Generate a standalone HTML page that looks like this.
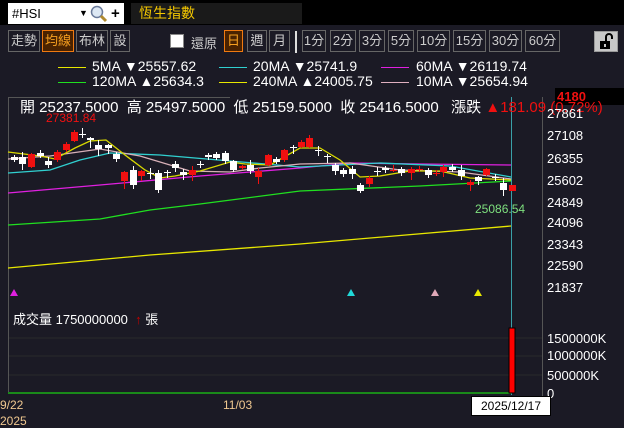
<!DOCTYPE html>
<html><head><meta charset="utf-8"><style>
*{margin:0;padding:0;box-sizing:border-box}
body{width:624px;height:426px;background:#1b1a25;overflow:hidden;position:relative;font-family:"Liberation Sans","Noto Sans CJK TC",sans-serif;color:#fff}
.a{position:absolute;white-space:nowrap}
.b{position:absolute;border:1px solid #666;color:#ccc;font-size:13px;text-align:center;line-height:20px;height:22px;top:30px}
.o{border-color:#f07a10;background:#4a2200;color:#f7a020}
</style></head><body>
<div class="a" style="left:0;top:0;width:624px;height:25px;background:#000"></div>
<div class="a" style="left:8px;top:3px;width:116px;height:21px;background:#fff;color:#000;font-size:13px;line-height:21px;padding-left:4px">#HSI<span style="position:absolute;left:71px;font-size:9px">▼</span>
<svg style="position:absolute;left:82px;top:2px" width="18" height="18"><circle cx="7" cy="7" r="5.5" fill="#dde8f4" stroke="#6a7a9a" stroke-width="1.5"/><line x1="11" y1="11" x2="16" y2="16" stroke="#b08a30" stroke-width="3"/></svg>
<span style="position:absolute;left:103px;font-weight:bold;font-size:15px">+</span></div>
<div class="a" style="left:131px;top:3px;width:171px;height:21px;background:#1a1a1a;color:#f5c800;font-size:14px;line-height:21px;padding-left:8px">恆生指數</div>
<div class="b" style="left:8px;width:32px">走勢</div>
<div class="b o" style="left:42px;width:32px">均線</div>
<div class="b" style="left:76px;width:32px">布林</div>
<div class="b" style="left:110px;width:20px">設</div>
<div class="a" style="left:170px;top:34px;width:14px;height:14px;background:#fff;border:1px solid #888"></div>
<div class="a" style="left:191px;top:33px;font-size:13px;color:#ccc">還原</div>
<div class="b o" style="left:224px;width:19px">日</div>
<div class="b" style="left:247px;width:20px">週</div>
<div class="b" style="left:269px;width:21px">月</div>
<div class="a" style="left:295px;top:31px;width:2px;height:22px;background:#ddd"></div>
<div class="b" style="left:302px;width:24px">1分</div>
<div class="b" style="left:330px;width:26px">2分</div>
<div class="b" style="left:359px;width:26px">3分</div>
<div class="b" style="left:388px;width:26px">5分</div>
<div class="b" style="left:417px;width:33px">10分</div>
<div class="b" style="left:453px;width:33px">15分</div>
<div class="b" style="left:489px;width:33px">30分</div>
<div class="b" style="left:525px;width:35px">60分</div>
<div class="a" style="left:594px;top:31px;width:24px;height:21px;background:#c8c8c8;border:1px solid #999">
<svg width="22" height="19"><path d="M11 9 V5 a3 3 0 0 1 6 0 V7" fill="none" stroke="#000" stroke-width="2"/><rect x="5" y="9" width="10" height="8" fill="#000"/><rect x="9" y="12" width="2" height="3" fill="#c8c8c8"/></svg></div>
<div class="a" style="font-size:14px;left:0;top:58px;width:624px;height:40px;color:#fff">
<span class="a" style="left:58px;top:9px;width:28px;height:1px;background:#e8e800"></span><span class="a" style="left:92px;top:0px">5MA ▼25557.62</span>
<span class="a" style="left:219px;top:9px;width:28px;height:1px;background:#30d0d0"></span><span class="a" style="left:253px;top:0px">20MA ▼25741.9</span>
<span class="a" style="left:381px;top:9px;width:28px;height:1px;background:#e020e0"></span><span class="a" style="left:416px;top:0px">60MA ▼26119.74</span>
<span class="a" style="left:58px;top:24px;width:28px;height:1px;background:#20e020"></span><span class="a" style="left:92px;top:15px">120MA ▲25634.3</span>
<span class="a" style="left:219px;top:24px;width:28px;height:1px;background:#e8e800"></span><span class="a" style="left:253px;top:15px">240MA ▲24005.75</span>
<span class="a" style="left:381px;top:24px;width:28px;height:1px;background:#e0b0c0"></span><span class="a" style="left:416px;top:15px">10MA ▼25654.94</span>
</div>
<div class="a" style="left:555px;top:88px;width:69px;height:17px;background:#000;color:#f01010;font-weight:bold;font-size:13px;padding-left:2px;line-height:17px">4180</div>
<svg class="a" style="left:0;top:0" width="624" height="426">
<g stroke="#2a2a2a" stroke-width="1"><line x1="8" y1="338" x2="542" y2="338"/><line x1="8" y1="356" x2="542" y2="356"/><line x1="8" y1="375" x2="542" y2="375"/></g>
<line x1="8.5" y1="97" x2="8.5" y2="393" stroke="#555"/>
<line x1="8" y1="97.5" x2="230" y2="97.5" stroke="#555"/>
<line x1="542.5" y1="97" x2="542.5" y2="398" stroke="#555"/>
<line x1="8" y1="393" x2="512" y2="393" stroke="#1a8a1a" stroke-width="2"/>
<line x1="511.5" y1="97" x2="511.5" y2="395" stroke="#3aa0a8"/>
<g fill="none" stroke-width="1.3">
<polyline stroke="#e8e800" points="8,268 150,255 300,244 511,226"/>
<polyline stroke="#20e020" points="8,225 100,219 150,210 200,204 300,191 420,186 511,181"/>
<polyline stroke="#e020e0" points="8,193 100,185 200,176 300,168 350,163 420,164 511,165"/>
<polyline stroke="#30d0d0" points="8,173 50,170 80,160 110,153 160,155 230,161 300,167 380,163 450,166 511,177"/>
<polyline stroke="#d8b0b8" points="8,159 50,156 100,149 140,156 190,171 230,172 260,168 300,164 350,163 400,170 460,172 511,179"/>
<polyline stroke="#d8d800" points="8,152 40,156 55,159 75,148 90,141 106,140 125,155 145,170 160,178 175,176 200,171 230,162 245,164 270,165 300,148 320,148 340,160 360,177 380,176 410,171 440,171 470,178 511,180"/>
</g>
<path stroke="#fff" stroke-width="1" d="M14.5 155V162M22.5 152V170M40.5 150V158M48.5 157V168M82.5 128V138M90.5 137V148M98.5 140V156M108.5 144V154M116.5 152V162M133.5 166V189M150.5 168V179M158.5 170V193M167.5 170V178M175.5 161V172M183.5 169V180M200.5 161V168M208.5 153V160M216.5 152V160M225.5 151V164M233.5 160V172M250.5 160V174M276.5 157V164M293.5 145V154M318.5 146V156M327.5 154V163M335.5 163V175M343.5 168V177M352.5 166V179M360.5 183V193M377.5 167V176M385.5 166V173M401.5 167V176M428.5 168V178M452.5 164V172M461.5 165V180M478.5 176V185M495.5 174V181M503.5 178V196"/>
<path fill="#fff" d="M11 157h7v3h-7zM19 157h7v7h-7zM37 153h7v3h-7zM45 161h7v4h-7zM79 134h7v1h-7zM87 138h7v2h-7zM95 145h7v4h-7zM105 145h7v3h-7zM113 154h7v5h-7zM130 170h7v15h-7zM147 173h7v1h-7zM155 173h7v17h-7zM164 172h7v1h-7zM172 164h7v4h-7zM180 172h7v3h-7zM197 164h7v1h-7zM205 155h7v2h-7zM213 154h7v4h-7zM222 153h7v8h-7zM230 161h7v9h-7zM247 165h7v6h-7zM273 159h7v3h-7zM290 147h7v1h-7zM315 150h7v1h-7zM324 156h7v1h-7zM332 165h7v6h-7zM340 170h7v4h-7zM349 169h7v5h-7zM357 185h7v6h-7zM374 171h7v1h-7zM382 168h7v2h-7zM398 169h7v4h-7zM425 170h7v5h-7zM449 167h7v3h-7zM458 170h7v6h-7zM475 177h7v4h-7zM492 177h7v1h-7zM500 183h7v7h-7z"/>
<path stroke="#f01010" stroke-width="1" d="M31.5 153V168M57.5 150V162M66.5 142V152M74.5 130V142M124.5 171V189M141.5 170V181M192.5 166V181M242.5 165V170M258.5 168V184M268.5 154V166M284.5 149V162M301.5 140V148M309.5 135V148M369.5 176V187M393.5 165V172M411.5 167V180M419.5 166V172M436.5 170V176M443.5 165V177M470.5 180V191M486.5 168V176"/>
<path fill="#f01010" d="M28 154h7v13h-7zM54 152h7v8h-7zM63 144h7v6h-7zM71 132h7v9h-7zM121 172h7v9h-7zM138 171h7v5h-7zM189 170h7v5h-7zM239 166h7v2h-7zM255 171h7v6h-7zM265 155h7v10h-7zM281 150h7v10h-7zM298 142h7v5h-7zM306 138h7v9h-7zM366 178h7v6h-7zM390 170h7v1h-7zM408 169h7v4h-7zM416 169h7v1h-7zM433 173h7v1h-7zM440 167h7v5h-7zM467 182h7v3h-7zM483 169h7v6h-7zM509 185h7v6h-7z"/>
<rect x="509" y="328" width="6" height="65" fill="#f00" stroke="#000"/>
<polygon points="10,296 14,289 18,296" fill="#e020e0"/>
<polygon points="347,296 351,289 355,296" fill="#20d8d8"/>
<polygon points="431,296 435,289 439,296" fill="#e0a8b8"/>
<polygon points="474,296 478,289 482,296" fill="#e8e800"/>
</svg>
<div class="a" style="left:20px;top:96px;font-size:15px">開 25237.5000 &nbsp;高 25497.5000 &nbsp;低 25159.5000 &nbsp;收 25416.5000 &nbsp;&nbsp;漲跌 <span style="color:#f01010">▲181.09 (0.72%)</span></div>
<div class="a" style="left:46px;top:111px;font-size:12px;color:#f01010">27381.84</div>
<div class="a" style="left:475px;top:202px;font-size:12px;color:#7ee07e">25086.54</div>
<div class="a" style="left:547px;top:0;font-size:13px;line-height:13px">
<div class="a" style="top:107px">27861</div><div class="a" style="top:129px">27108</div><div class="a" style="top:152px">26355</div><div class="a" style="top:174px">25602</div><div class="a" style="top:196px">24849</div><div class="a" style="top:216px">24096</div><div class="a" style="top:238px">23343</div><div class="a" style="top:259px">22590</div><div class="a" style="top:281px">21837</div>
<div class="a" style="top:332px">1500000K</div><div class="a" style="top:349px">1000000K</div><div class="a" style="top:369px">500000K</div><div class="a" style="top:387px">0</div>
</div>
<div class="a" style="left:13px;top:309px;font-size:13px">成交量 1750000000 &nbsp;<span style="color:#c00000">↑</span> 張</div>
<div class="a" style="left:0;top:398px;font-size:12px;color:#f0c890">9/22</div>
<div class="a" style="left:0;top:414px;font-size:12px;color:#f0c890">2025</div>
<div class="a" style="left:223px;top:398px;font-size:12px;color:#f0c890">11/03</div>
<div class="a" style="left:471px;top:396px;width:80px;height:20px;background:#fff;border:1px solid #000;color:#000;font-size:12px;text-align:center;line-height:18px">2025/12/17</div>
</body></html>
